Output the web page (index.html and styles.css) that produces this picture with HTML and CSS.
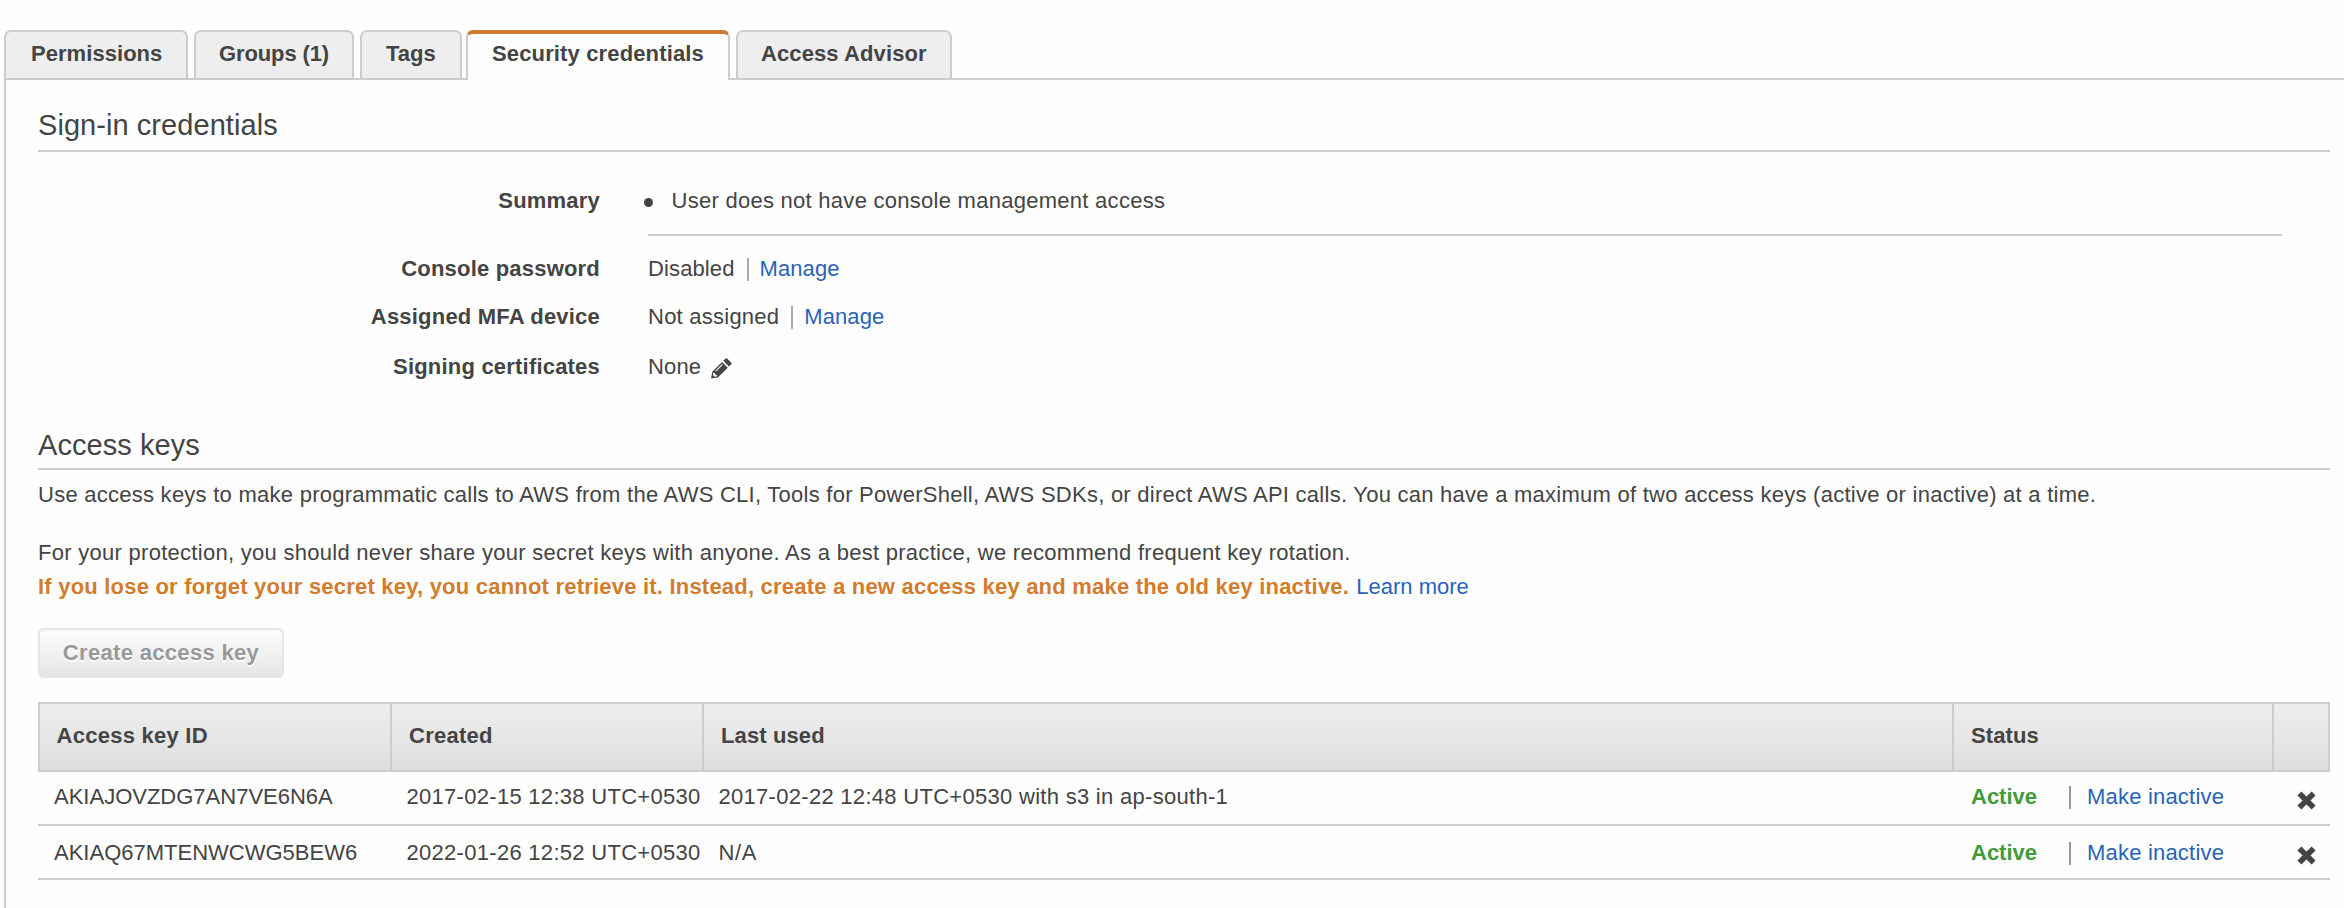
FILE: index.html
```
<!DOCTYPE html>
<html lang="en">
<head>
<meta charset="utf-8">
<title>Security credentials</title>
<link rel="stylesheet" href="styles.css">
</head>
<body>
<nav class="tabs">
  <a class="tab tab-permissions">Permissions</a>
  <a class="tab tab-groups">Groups (1)</a>
  <a class="tab tab-tags">Tags</a>
  <a class="tab tab-security active">Security credentials</a>
  <a class="tab tab-advisor">Access Advisor</a>
</nav>
<main class="panel">
  <h2 class="heading">Sign-in credentials</h2>
  <section class="details">
    <div class="detail summary">
      <div class="label">Summary</div>
      <ul class="value summary-list"><li>User does not have console management access</li></ul>
    </div>
    <div class="detail console">
      <div class="label">Console password</div>
      <div class="value"><span class="password-state">Disabled</span><i class="sep"></i><a class="link">Manage</a></div>
    </div>
    <div class="detail mfa">
      <div class="label">Assigned MFA device</div>
      <div class="value"><span class="mfa-state">Not assigned</span><i class="sep"></i><a class="link">Manage</a></div>
    </div>
    <div class="detail signing">
      <div class="label">Signing certificates</div>
      <div class="value"><span class="signing-state">None</span>
        <svg class="pencil" viewBox="0 0 22 22"><path fill="#444" d="M0 21.5 1.4 14.4 11.6 4.1 17.6 10.1 7.2 20.3ZM12.8 2.9 15.3.5Q16 0 16.8.6L21.3 5Q21.9 5.8 21.3 6.5L18.8 8.9Z"/><path fill="#fefefe" d="M2.3 15.5 4.1 15.8 4.5 17.4 6.1 17.8 6.3 19.2 3.8 19.7 1.9 17.8Z"/><path stroke="#fefefe" stroke-width="1.1" fill="none" d="M5 13.7 12 6.7"/></svg>
      </div>
    </div>
  </section>
  <h2 class="heading heading-keys">Access keys</h2>
  <p class="intro">Use access keys to make programmatic calls to AWS from the AWS CLI, Tools for PowerShell, AWS SDKs, or direct AWS API calls. You can have a maximum of two access keys (active or inactive) at a time.</p>
  <p class="advice">For your protection, you should never share your secret keys with anyone. As a best practice, we recommend frequent key rotation.</p>
  <p><strong class="warning">If you lose or forget your secret key, you cannot retrieve it. Instead, create a new access key and make the old key inactive.</strong> <a class="link learn">Learn more</a></p>
  <button class="create" disabled>Create access key</button>
  <table class="keys">
    <colgroup><col class="c-id"><col class="c-created"><col class="c-used"><col class="c-status"><col class="c-delete"></colgroup>
    <thead>
      <tr><th>Access key ID</th><th>Created</th><th class="th-tight">Last used</th><th class="th-tight">Status</th><th></th></tr>
    </thead>
    <tbody>
      <tr class="row-first">
        <td>AKIAJOVZDG7AN7VE6N6A</td><td class="date">2017-02-15 12:38 UTC+0530</td><td class="date">2017-02-22 12:48 UTC+0530 with s3 in ap-south-1</td>
        <td class="status"><div class="status-row"><b class="state">Active</b><i class="sep"></i><a class="link toggle">Make inactive</a></div></td>
        <td class="delete"><svg class="cross" viewBox="0 0 19 19"><path d="M2.4 2.4 16.6 16.6M16.6 2.4 2.4 16.6"/></svg></td>
      </tr>
      <tr class="row-second">
        <td>AKIAQ67MTENWCWG5BEW6</td><td class="date">2022-01-26 12:52 UTC+0530</td><td class="date none">N/A</td>
        <td class="status"><div class="status-row"><b class="state">Active</b><i class="sep"></i><a class="link toggle">Make inactive</a></div></td>
        <td class="delete"><svg class="cross" viewBox="0 0 19 19"><path d="M2.4 2.4 16.6 16.6M16.6 2.4 2.4 16.6"/></svg></td>
      </tr>
    </tbody>
  </table>
</main>
</body>
</html>
```
FILE: styles.css
```
* { box-sizing: border-box; }
body {
  margin: 0;
  height: 908px;
  overflow: hidden;
  display: flex;
  flex-direction: column;
  background: #fefefe;
  color: #444;
  font: 22px/34px "Liberation Sans", Arial, sans-serif;
  white-space: nowrap;
}
.tabs { display: flex; gap: 6px; padding: 30px 0 0 4px; height: 78px; flex: none; }
.tab {
  height: 48px;
  border: 2px solid #ccc;
  border-bottom: 0;
  border-radius: 7px 7px 0 0;
  background: #eee;
  font-weight: bold;
  line-height: 34px;
  padding: 5px 0 0 24px;
}
.tab-permissions { width: 184px; padding-left: 25px; letter-spacing: .05px; }
.tab-groups { width: 160px; padding-left: 23px; letter-spacing: -.12px; }
.tab-tags { width: 102px; margin-right: -2px; }
.tab-security { width: 264px; letter-spacing: .14px; }
.tab-advisor { width: 216px; padding-left: 23px; letter-spacing: .1px; }
.tab.active {
  position: relative;
  height: 50px;
  border-top: 4px solid #d17b2c;
  background: #fefefe;
  padding-top: 3px;
}
.panel { flex: 1; border: solid #ccc; border-width: 2px 0 0 2px; margin-left: 4px; padding: 28px 14px 0 32px; }
.heading { margin: 0; border-bottom: 2px solid #ccc; padding-bottom: 8px; font-size: 29px; font-weight: normal; line-height: 34px; letter-spacing: .06px; }
.heading-keys { margin-top: 44px; padding-bottom: 6px; }
.detail { display: grid; grid-template-columns: 562px 1fr; column-gap: 48px; padding-right: 48px; }
.label { font-weight: bold; text-align: right; letter-spacing: .2px; }
.value { display: flex; }
.summary { margin-top: 32px; }
.summary-list { list-style: none; margin: 0; padding: 0 0 16px; border-bottom: 2px solid #ccc; letter-spacing: .27px; }
.summary-list li { display: flex; align-items: center; }
.summary-list li::before { content: ""; width: 9px; height: 9px; border-radius: 50%; background: #444; margin: 2px 18.5px 0 -4px; }
.console { margin-top: 16px; }
.mfa { margin-top: 14px; }
.signing { margin-top: 16px; }
.password-state { letter-spacing: .12px; }
.mfa-state { letter-spacing: .24px; }
.signing-state { letter-spacing: .15px; }
.link { color: #2a62ba; letter-spacing: .08px; }
.sep { width: 2px; height: 23px; background: #aaa; margin: 6px 11px 0 12px; flex: none; }
.pencil { width: 21px; height: 21px; margin: 8px 0 0 10px; }
p { margin: 0; }
.intro { margin-top: 8px; letter-spacing: .255px; }
.advice { margin-top: 24px; letter-spacing: .28px; }
.warning { color: #d27c2c; letter-spacing: .21px; }
.learn { margin-left: 1px; letter-spacing: 0; }
.create {
  display: block;
  width: 246px;
  height: 50px;
  margin-top: 24px;
  padding: 0;
  border: 2px solid #e5e5e5;
  border-radius: 6px;
  background: linear-gradient(#fcfcfc, #e6e6e6);
  color: #999;
  font: bold 22px/34px "Liberation Sans", Arial, sans-serif;
  letter-spacing: .32px;
  text-shadow: 0 2px 1px #fff;
}
.keys { width: 2292px; margin-top: 24px; table-layout: fixed; border-collapse: separate; border-spacing: 0; }
.c-id { width: 354px; }
.c-created { width: 312px; }
.c-used { width: 1250px; }
.c-status { width: 320px; }
.c-delete { width: 56px; }
.keys th {
  height: 70px;
  border: solid #ccc;
  border-width: 2px 2px 2px 0;
  background: linear-gradient(#eee, #dedede);
  padding: 0 0 2px 17px;
  text-align: left;
  letter-spacing: .26px;
}
.keys .th-tight { letter-spacing: .12px; }
.keys th:first-child { border-left-width: 2px; padding-left: 16.5px; }
.keys td { height: 54px; border-bottom: 2px solid #ccc; padding: 8px 0 0 16px; vertical-align: top; }
.row-second td { padding-top: 10px; }
.keys .date { padding-left: 14.5px; letter-spacing: .29px; }
.keys .none { letter-spacing: .6px; }
.keys .status { padding-left: 17px; }
.status-row { display: flex; }
.state { width: 66px; color: #3f9b3c; }
.status .sep { margin: 6px 16px 0 32px; background: #999; }
.toggle { letter-spacing: .2px; }
.keys .delete { padding: 19px 0 0 22.5px; }
.row-second .delete { padding-top: 20px; }
.cross { display: block; width: 19px; height: 19px; stroke: #444; stroke-width: 5.6; stroke-linecap: butt; }
```
